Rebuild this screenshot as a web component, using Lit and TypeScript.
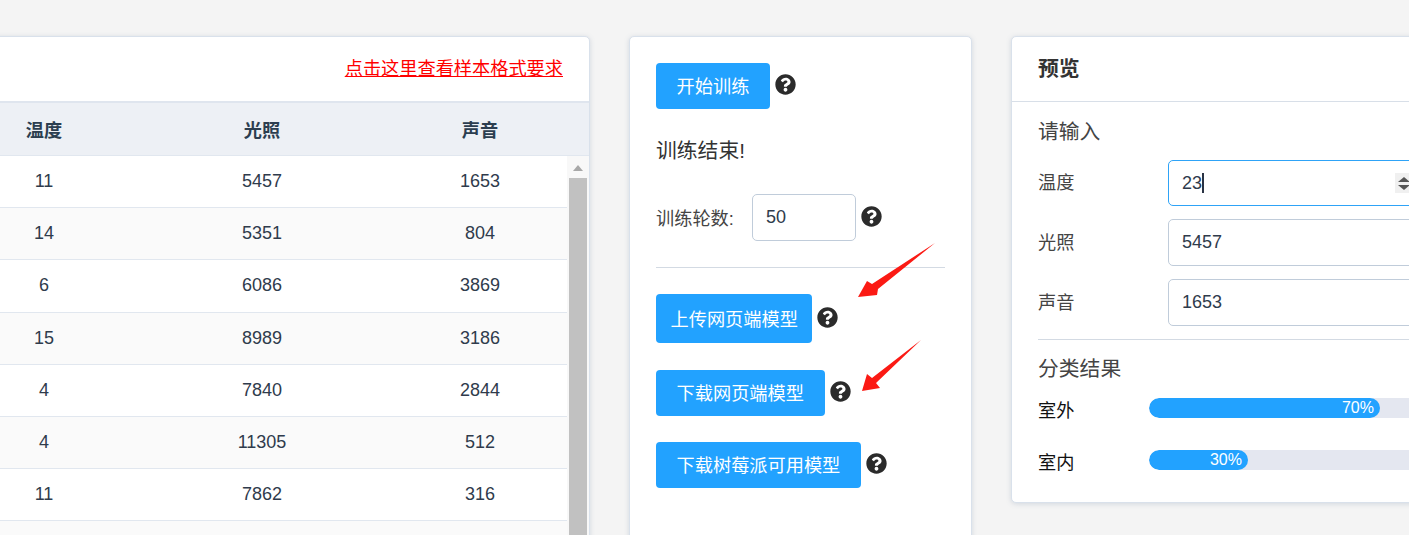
import { LitElement, html, css, svg } from "lit";
import { customElement } from "lit/decorators.js";

const ROWS: (number | string)[][] = [
  [11, 5457, 1653], [14, 5351, 804], [6, 6086, 3869], [15, 8989, 3186],
  [4, 7840, 2844], [4, 11305, 512], [11, 7862, 316], ["", "", ""],
];
const Q = "M504 256c0 136.997-111.043 248-248 248S8 392.997 8 256C8 119.083 119.043 8 256 8s248 111.083 248 248zM262.655 90c-54.497 0-89.255 22.957-116.549 63.758-3.536 5.286-2.353 12.415 2.715 16.258l34.699 26.31c5.205 3.947 12.621 3.008 16.665-2.122 17.864-22.658 30.113-35.797 57.303-35.797 20.429 0 45.698 13.148 45.698 32.958 0 14.976-12.363 22.667-32.534 33.976C247.128 238.528 216 254.941 216 296v4c0 6.627 5.373 12 12 12h56c6.627 0 12-5.373 12-12v-1.333c0-28.462 83.186-29.647 83.186-106.667 0-58.002-60.165-102-116.531-102zM256 338c-25.365 0-46 20.635-46 46 0 25.364 20.635 46 46 46s46-20.636 46-46c0-25.365-20.635-46-46-46z";

@customElement("app-root")
export class AppRoot extends LitElement {
  static styles = css`
    :host { display: block; height: 535px; overflow: hidden; background: #f4f4f4; font-family: "Liberation Sans", "Noto Sans CJK SC", sans-serif; color: #303133; }
    * { box-sizing: border-box; }
    .page { display: flex; align-items: flex-start; width: 1600px; padding-top: 36px; margin-left: -66px; }
    .card { background: #fff; border: 1px solid #d9e1eb; border-radius: 5px; box-shadow: 0 1px 5px rgba(110,130,160,.25); flex: none; }
    .left { width: 656px; height: 560px; margin-right: 39px; }
    .left-head { height: 66px; border-bottom: 2px solid #dfe5ee; display: flex; align-items: center; justify-content: flex-end; padding: 0 26px 4px 0; }
    .left-head a { color: #f00; font-size: 18.2px; text-decoration: underline; }
    .thead, .row { display: grid; grid-template-columns: repeat(3, 218px); text-align: center; }
    .thead { height: 53px; background: #edf0f5; border-bottom: 1px solid #e1e7ef; align-items: center; font-weight: 700; font-size: 18.2px; color: #2c3e50; }
    .tbody { display: flex; height: 400px; }
    .rows { width: 632px; overflow: hidden; flex: none; }
    .row { height: 52.2px; border-bottom: 1px solid #e1e7ef; align-items: center; font-size: 18px; color: #2f3b4c; width: 654px; }
    .row.alt { background: #fafafa; }
    .sb { width: 22px; flex: none; background: #f8f8f8; padding: 0 2px; }
    .sb-arrow { height: 22px; display: flex; justify-content: center; padding-top: 9px; }
    .sb-arrow i { border: 5px solid transparent; border-top: 0; border-bottom: 6px solid #a8a8a8; width: 0; height: 0; }
    .sb-thumb { height: 400px; background: #c1c1c1; }

    .mid { width: 343px; height: 560px; padding: 26px; margin-right: 39px; position: relative; }
    .line { display: flex; align-items: center; }
    .btn { background: #22a2ff; color: #fff; font-size: 18.2px; height: 46px; padding: 0 20.6px 2px; border-radius: 4px; display: flex; align-items: center; white-space: nowrap; flex: none; }
    .btn.tall { height: 49px; padding: 0 14.5px 2px; }
    .q { width: 21px; height: 21px; margin: 0 0 3px 5px; flex: none; fill: #2b2b2b; display: block; }
    .done { font-size: 20.8px; line-height: 30px; margin: 27px 0 28px; color: #333; }
    .lbl { font-size: 18.2px; color: #444; width: 96px; flex: none; padding-bottom: 2px; }
    .inp { border: 1px solid #c0ccda; border-radius: 5px; height: 47px; background: #fff; font-size: 18px; color: #2f3b4c; display: flex; align-items: center; padding-left: 13px; }
    .epochs { width: 104px; flex: none; }
    .hr { height: 1px; background: #d3dae3; }
    .mid .hr { margin: 26px 0; }
    .gap1 { margin-top: 27px; }
    .gap2 { margin-top: 26px; }
    .arrows { position: absolute; left: 0; top: 0; width: 342px; height: 500px; pointer-events: none; }

    .right { width: 520px; height: 467px; }
    .rhead { height: 65px; border-bottom: 1px solid #d8dfe8; padding: 0 26px 4px; display: flex; align-items: center; font-size: 20.8px; font-weight: 700; color: #333; }
    .rbody { padding: 15px 26px 0; }
    .sect { font-size: 20.8px; line-height: 30px; color: #444; }
    .fields { display: flex; flex-direction: column; gap: 13px; margin-top: 13px; }
    .field { display: flex; align-items: center; }
    .flabel { width: 130px; flex: none; font-size: 18.2px; color: #444; padding-bottom: 4px; }
    .field .inp { width: 260px; flex: none; }
    .focus { border-color: #2ea3f7; height: 46px; padding-right: 14px; }
    .caret { width: 2px; height: 20px; background: #2a3344; }
    .spin { margin-left: auto; width: 18px; height: 20px; background: #f0f0f0; display: flex; flex-direction: column; align-items: center; justify-content: center; gap: 3px; }
    .spin i { width: 0; height: 0; border: 6px solid transparent; }
    .spin .up { border-top: 0; border-bottom: 5px solid #555; }
    .spin .dn { border-bottom: 0; border-top: 5px solid #555; }
    .right .hr { margin-top: 13px; }
    .res { margin-top: 14px; }
    .bars { display: flex; flex-direction: column; gap: 32px; margin-top: 14px; }
    .bar-row { display: flex; align-items: flex-start; height: 20px; }
    .blabel { width: 111px; flex: none; font-size: 18.2px; color: #111; line-height: 26px; }
    .track { width: 330px; height: 20px; border-radius: 10px; background: #e4e7f0; flex: none; overflow: hidden; }
    .fill { height: 20px; border-radius: 10px; background: #22a2ff; color: #fff; font-size: 16px; line-height: 20px; text-align: right; padding-right: 6px; }
  `;

  private q() {
    return html`<svg class="q" viewBox="0 0 512 512"><path d="${Q}"></path></svg>`;
  }

  render() {
    return html`<div class="page">
      <section class="card left">
        <div class="left-head"><a>点击这里查看样本格式要求</a></div>
        <div class="thead"><div>温度</div><div>光照</div><div>声音</div></div>
        <div class="tbody">
          <div class="rows">
            ${ROWS.map((r, i) => html`<div class="row ${i % 2 ? "alt" : ""}">${r.map((c) => html`<div>${c}</div>`)}</div>`)}
          </div>
          <div class="sb"><div class="sb-arrow"><i></i></div><div class="sb-thumb"></div></div>
        </div>
      </section>

      <section class="card mid">
        <div class="line"><div class="btn">开始训练</div>${this.q()}</div>
        <div class="done">训练结束!</div>
        <div class="line"><div class="lbl">训练轮数:</div><div class="inp epochs">50</div>${this.q()}</div>
        <div class="hr"></div>
        <div class="line"><div class="btn tall">上传网页端模型</div>${this.q()}</div>
        <div class="line gap1"><div class="btn">下载网页端模型</div>${this.q()}</div>
        <div class="line gap2"><div class="btn">下载树莓派可用模型</div>${this.q()}</div>
        <svg class="arrows" viewBox="630 37 342 500">
          ${svg`<polygon fill="#fb1a14" points="935,243 878,289 877,295 858,297 867,281 872,284"></polygon>
          <polygon fill="#fb1a14" points="921,340 876,383 880,388 862,391 867,374 872,378"></polygon>`}
        </svg>
      </section>

      <section class="card right">
        <div class="rhead">预览</div>
        <div class="rbody">
          <div class="sect">请输入</div>
          <div class="fields">
            <div class="field"><div class="flabel">温度</div><div class="inp focus">23<span class="caret"></span><span class="spin"><i class="up"></i><i class="dn"></i></span></div></div>
            <div class="field"><div class="flabel">光照</div><div class="inp">5457</div></div>
            <div class="field"><div class="flabel">声音</div><div class="inp">1653</div></div>
          </div>
          <div class="hr"></div>
          <div class="sect res">分类结果</div>
          <div class="bars">
            <div class="bar-row"><div class="blabel">室外</div><div class="track"><div class="fill" style="width:70%">70%</div></div></div>
            <div class="bar-row"><div class="blabel">室内</div><div class="track"><div class="fill" style="width:30%">30%</div></div></div>
          </div>
        </div>
      </section>
    </div>`;
  }
}
